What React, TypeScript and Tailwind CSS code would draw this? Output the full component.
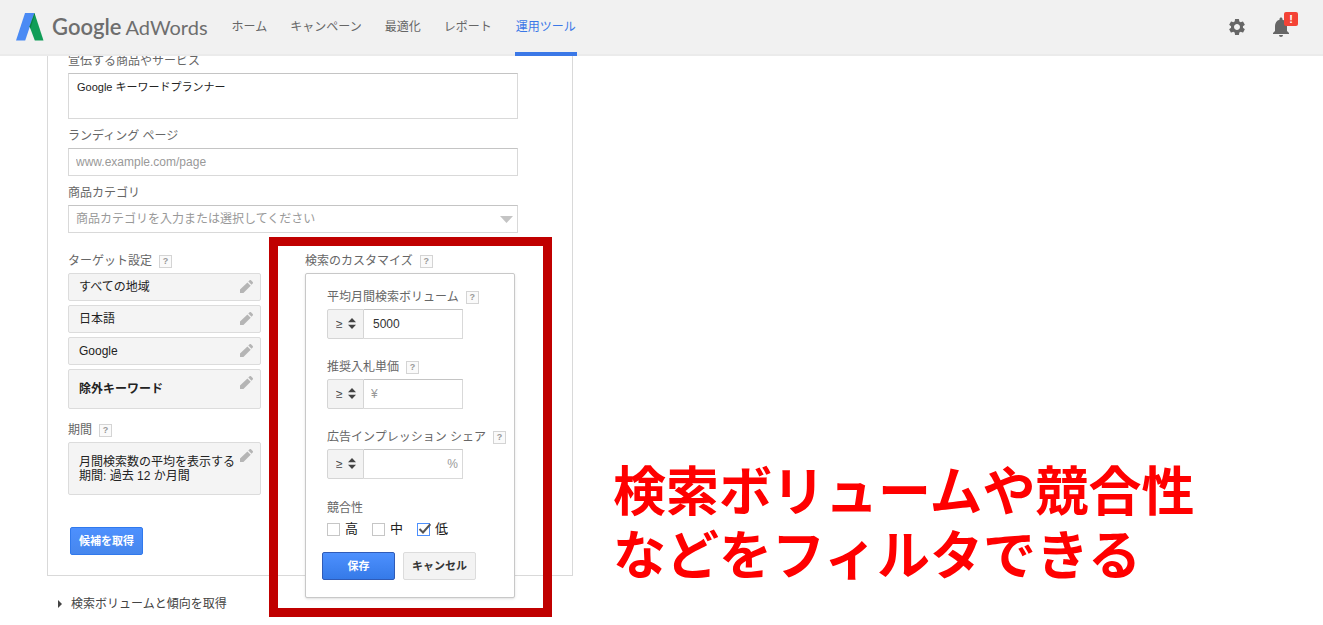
import React, { FC, ReactNode, useState } from "react";
import { MdNotifications, MdSettings } from "react-icons/md";

const NAV_ITEMS = ["ホーム", "キャンペーン", "最適化", "レポート", "運用ツール"];
const TARGETS = ["すべての地域", "日本語", "Google"];

const Logo: FC = () => (
  <a href="#" className="flex items-center gap-2 text-[#6e6e6e]">
    <svg width="28" height="28" viewBox="0 0 28 28" aria-hidden="true">
      <path d="M9 0h9.5L9.2 27.5H0z" fill="#4a8af4" />
      <path d="M18.5 0 27.5 27.5H18.8L13.6 13.5z" fill="#119d58" />
      <path d="M18.5 0 13.6 13.5l.8 2.2L18.9 1.2z" fill="#0b8043" />
    </svg>
    <span className="flex items-baseline gap-1 font-['Lato',sans-serif] leading-7">
      <span className="text-[22px] font-semibold">Google</span>
      <span className="text-xl">AdWords</span>
    </span>
  </a>
);

const Pencil: FC = () => (
  <svg
    className="mt-[6px] shrink-0"
    width="13"
    height="13"
    viewBox="0 0 13 13"
    fill="#b5b5b5"
    aria-hidden="true"
  >
    <path d="M0 13V9.6L7.4 2.4l3.3 3.3L3.4 13zM8.3 1.6 9.6.3a1 1 0 0 1 1.4 0L12.7 2a1 1 0 0 1 0 1.4l-1.2 1.4z" />
  </svg>
);

const Help: FC = () => (
  <button
    type="button"
    aria-label="ヘルプ"
    className="flex size-[13px] shrink-0 items-center justify-center border border-[#d4d4d4] bg-[#fafafa] text-[9px] leading-none font-bold text-[#999]"
  >
    ?
  </button>
);

type LabelProps = { htmlFor?: string; help?: boolean; children: ReactNode };

const Label: FC<LabelProps> = ({ htmlFor, help, children }) => (
  <div className="mb-[3px] flex items-center gap-[7px] text-xs leading-[18px] whitespace-nowrap text-[#666]">
    {htmlFor ? <label htmlFor={htmlFor}>{children}</label> : <span>{children}</span>}
    {help && <Help />}
  </div>
);

const Setting: FC<{ className?: string; children: ReactNode }> = ({ className = "h-7", children }) => (
  <button
    type="button"
    className={`flex w-full justify-between rounded-xs border border-[#dcdcdc] bg-[#f4f4f4] pr-[7px] pl-[10px] text-left text-xs text-[#222] ${className}`}
  >
    <span className="self-center leading-[14px] whitespace-nowrap">{children}</span>
    <Pencil />
  </button>
);

type FilterProps = {
  id: string;
  label: string;
  value?: string;
  placeholder?: string;
  className?: string;
};

const Filter: FC<FilterProps> = ({ id, label, value = "", placeholder, className = "" }) => {
  const [amount, setAmount] = useState(value);

  return (
    <div>
      <Label htmlFor={id} help>
        {label}
      </Label>
      <div className="flex h-[30px]">
        <div className="relative w-[37px]">
          <select
            aria-label={label}
            className="h-full w-full appearance-none rounded-l-xs border border-[#d5d5d5] bg-[#f3f3f3] pl-2 text-xs text-[#444]"
          >
            <option>≥</option>
            <option>≤</option>
          </select>
          <svg
            className="pointer-events-none absolute top-[9px] right-2"
            width="8"
            height="11"
            viewBox="0 0 8 11"
            aria-hidden="true"
          >
            <path d="M0 4.3 4 0l4 4.3zM0 6.7 4 11l4-4.3z" fill="#444" />
          </svg>
        </div>
        <input
          id={id}
          type="text"
          value={amount}
          placeholder={placeholder}
          onChange={(e) => setAmount(e.target.value)}
          className={`w-[99px] border border-l-0 border-[#d9d9d9] border-t-[#c4c4c4] bg-white text-xs text-[#333] placeholder:text-[#999] focus:outline-none ${className}`}
        />
      </div>
    </div>
  );
};

const Check: FC<{ label: string; checked?: boolean }> = ({ label, checked }) => (
  <label className="flex items-center gap-[5px]">
    <span className="relative flex">
      <input
        type="checkbox"
        defaultChecked={checked}
        className="peer size-[13px] appearance-none border border-[#c6c6c6] bg-white checked:border-[#4d90fe]"
      />
      <svg
        className="pointer-events-none absolute top-0 left-px hidden peer-checked:block"
        width="13"
        height="12"
        viewBox="0 0 13 12"
        aria-hidden="true"
      >
        <path d="M1.5 6 5 9.5 12.3 1.2" fill="none" stroke="#555" strokeWidth="2" />
      </svg>
    </span>
    {label}
  </label>
);

const Header: FC = () => (
  <header className="relative z-10 flex h-14 items-center border-b-2 border-[#ebebeb] bg-[#f1f1f1] px-4">
    <Logo />
    <nav className="ml-6 flex gap-[23px] self-stretch text-xs whitespace-nowrap text-[#666]">
      {NAV_ITEMS.map((item) => (
        <a
          key={item}
          href="#"
          className={
            item === "運用ツール"
              ? "-mb-[2px] flex items-center border-b-4 border-[#3b78e7] px-px pt-px text-[#3b78e7]"
              : "flex items-center"
          }
        >
          {item}
        </a>
      ))}
    </nav>
    <div className="ml-auto flex items-center gap-[22px] pr-[14px] text-[#666]">
      <button type="button" aria-label="設定">
        <MdSettings className="size-5" />
      </button>
      <button type="button" aria-label="通知" className="relative">
        <MdNotifications className="size-6" />
        <span className="absolute -top-[3px] -right-[5px] flex size-[14px] items-center justify-center rounded-xs bg-[#f44336] text-[11px] leading-none font-bold text-white">
          !
        </span>
      </button>
    </div>
  </header>
);

const Customize: FC = () => (
  <div className="relative -mb-12 w-[210px]">
    <Label help>検索のカスタマイズ</Label>
    <div className="rounded-xs border border-[#c8c8c8] bg-white px-4 pt-[14px] pb-[17px] shadow-sm">
      <div className="flex flex-col gap-[19px] pl-[5px]">
        <Filter id="volume" label="平均月間検索ボリューム" value="5000" className="pl-[9px]" />
        <Filter id="bid" label="推奨入札単価" placeholder="¥" className="pl-[7px]" />
        <Filter
          id="share"
          label="広告インプレッション シェア"
          placeholder="%"
          className="pr-1 text-right"
        />
        <fieldset className="pt-[2px]">
          <legend className="text-xs leading-5 text-[#666]">競合性</legend>
          <div className="flex gap-[14px] text-[13px] leading-[18px] text-[#222]">
            <Check label="高" />
            <Check label="中" />
            <Check label="低" checked />
          </div>
        </fieldset>
      </div>
      <div className="mt-[14px] flex gap-2 text-[11px] font-bold">
        <button
          type="button"
          className="h-7 w-[73px] rounded-xs border border-[#2f5bb7] bg-linear-to-b from-[#4d90fe] to-[#357ae8] text-white"
        >
          保存
        </button>
        <button
          type="button"
          className="h-7 w-[73px] rounded-xs border border-[#dcdcdc] bg-[#f3f3f3] text-[#333]"
        >
          キャンセル
        </button>
      </div>
    </div>
    <div className="pointer-events-none absolute -top-[15px] -right-[37px] -bottom-[19px] -left-9 border-9 border-[#c00000]" />
  </div>
);

const App: FC = () => {
  const [product, setProduct] = useState("Google キーワードプランナー");

  return (
    <div className="min-h-screen bg-white font-['Liberation_Sans','Noto_Sans_CJK_JP',sans-serif]">
      <Header />
      <main className="-mt-1 flex flex-wrap gap-10 pl-[47px] lg:flex-nowrap">
        <section className="w-full max-w-[526px]">
          <form className="border border-t-0 border-[#d9d9d9] pr-[54px] pb-5 pl-5">
            <Label htmlFor="product">宣伝する商品やサービス</Label>
            <textarea
              id="product"
              value={product}
              onChange={(e) => setProduct(e.target.value)}
              className="mb-2 block h-[46px] w-full resize-none border border-[#d9d9d9] border-t-[#c4c4c4] px-2 py-1 text-[11px] leading-[18px] text-[#222] focus:outline-none"
            />
            <Label htmlFor="landing">ランディング ページ</Label>
            <input
              id="landing"
              type="text"
              placeholder="www.example.com/page"
              className="mb-2 block h-7 w-full border border-[#d9d9d9] border-t-[#c4c4c4] px-[7px] text-xs placeholder:text-[#999] focus:outline-none"
            />
            <Label htmlFor="category">商品カテゴリ</Label>
            <div className="relative mb-[19px]">
              <select
                id="category"
                className="block h-7 w-full appearance-none border border-[#d9d9d9] border-t-[#c4c4c4] bg-white px-[7px] text-xs text-[#999]"
              >
                <option>商品カテゴリを入力または選択してください</option>
              </select>
              <svg
                className="pointer-events-none absolute top-[11px] right-[5px]"
                width="13"
                height="7"
                viewBox="0 0 13 7"
                aria-hidden="true"
              >
                <path d="M0 0h13L6.5 7z" fill="#c4c4c4" />
              </svg>
            </div>

            <div className="flex items-start gap-11">
              <div className="w-[193px]">
                <Label help>ターゲット設定</Label>
                <div className="flex flex-col gap-1">
                  {TARGETS.map((target) => (
                    <Setting key={target}>{target}</Setting>
                  ))}
                  <Setting className="h-10 font-bold">除外キーワード</Setting>
                </div>
                <div className="mt-3">
                  <Label help>期間</Label>
                  <Setting className="h-[53px]">
                    月間検索数の平均を表示する
                    <br />
                    期間: 過去 12 か月間
                  </Setting>
                </div>
                <button
                  type="submit"
                  className="mt-8 ml-[2px] block h-7 w-[73px] rounded-xs border border-[#3079ed] bg-linear-to-b from-[#4d90fe] to-[#4787ed] text-[11px] font-bold text-white"
                >
                  候補を取得
                </button>
              </div>
              <Customize />
            </div>
          </form>
          <button type="button" className="mt-[19px] ml-[11px] flex items-center gap-[9px] text-xs leading-[18px] text-[#444]">
            <svg width="4" height="8" viewBox="0 0 4 8" aria-hidden="true">
              <path d="M0 0 4 4 0 8z" fill="#444" />
            </svg>
            検索ボリュームと傾向を取得
          </button>
        </section>

        <p className="mb-6 self-end text-[53px] leading-[64px] font-bold text-[#f00] lg:whitespace-nowrap">
          検索ボリュームや競合性
          <br />
          などをフィルタできる
        </p>
      </main>
    </div>
  );
};

export default App;
